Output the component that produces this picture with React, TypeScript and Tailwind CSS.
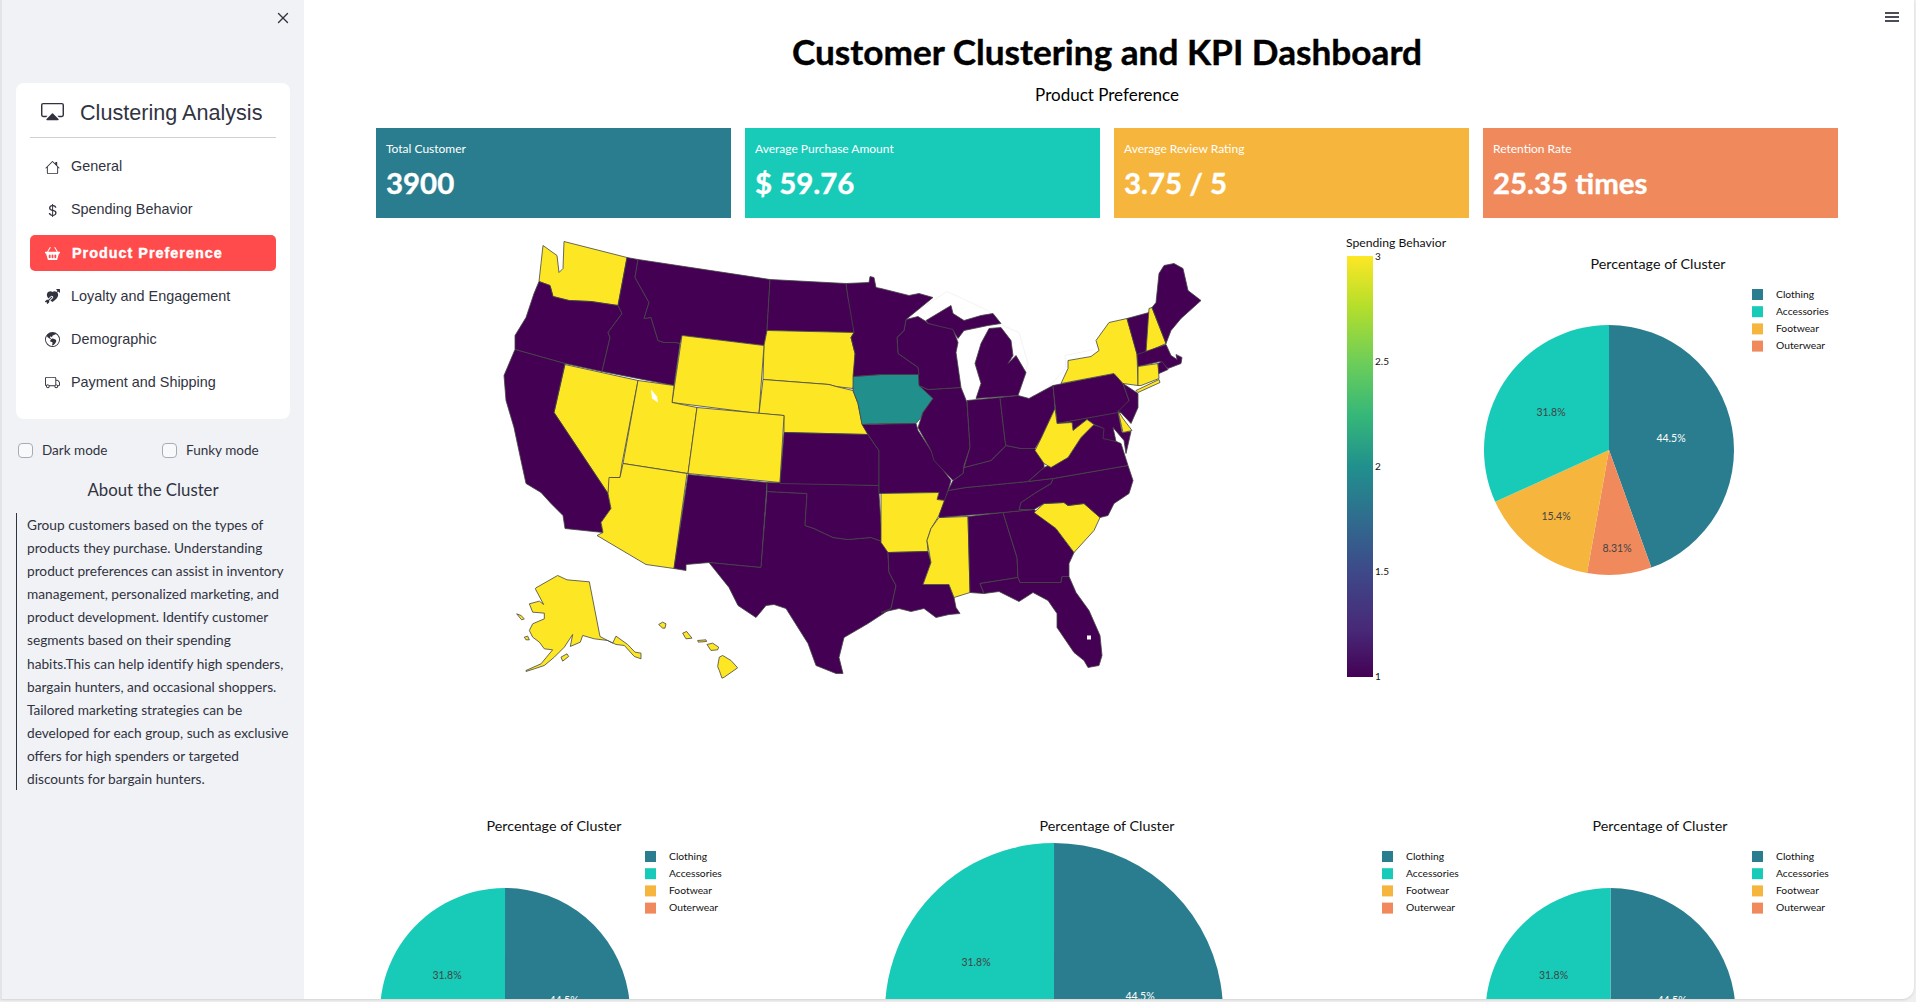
import React from 'react';
import { X } from 'lucide-react';
import {
  BsCast,
  BsHouse,
  BsCurrencyDollar,
  BsBasket2Fill,
  BsArrowThroughHeartFill,
  BsGlobeAmericas,
  BsTruck,
} from 'react-icons/bs';

const PURPLE = '#440154';
const YELLOW = '#fde725';
const TEAL = '#21908d';

const SLICES = [
  { name: 'Clothing', value: 0.445, color: '#2a7d8e' },
  { name: 'Outerwear', value: 0.0831, color: '#f08a5d' },
  { name: 'Footwear', value: 0.154, color: '#f6b53d' },
  { name: 'Accessories', value: 0.318, color: '#17cbb8' },
];
const LEGEND = ['Clothing', 'Accessories', 'Footwear', 'Outerwear'];

// page coordinates, the map svg uses the same numbers in its viewBox
const STATES: { fill: string; points: string }[] = [
  { fill: YELLOW, points: '542,245 556,255 558,272 562,268 563,241 626,257 617,305 590,301 568,300 552,296 549,285 538,281 540,263' },
  { fill: PURPLE, points: '538,281 549,285 552,296 568,300 590,301 617,305 621,313 607,332 609,337 601,371 564,363 514,349 514,335 525,317 533,293' },
  { fill: PURPLE, points: '626,257 637,259 634,277 648,302 643,318 650,317 657,340 663,342 675,342 679,343 673,385 601,371 609,337 607,332 621,313 617,305' },
  { fill: PURPLE, points: '637,259 769,279 766,330 763,345 681,335 679,343 675,342 663,342 657,340 650,317 643,318 648,302 634,277' },
  { fill: PURPLE, points: '769,279 845,283 847,297 852,317 853,332 766,330' },
  { fill: YELLOW, points: '766,330 853,332 850,337 854,353 854,377 852,388 835,386 828,384 762,379 763,345' },
  { fill: YELLOW, points: '681,335 763,345 758,413 671,402' },
  { fill: YELLOW, points: '762,379 828,384 835,386 852,390 857,403 861,423 867,434 783,432 783,415 758,413' },
  { fill: TEAL, points: '852,376 880,374 918,374 919,385 932,398 922,412 920,417 915,423 880,423 861,424 857,403 852,390' },
  { fill: YELLOW, points: '564,364 637,380 621,463 619,477 610,477 607,493 553,412' },
  { fill: PURPLE, points: '514,349 564,363 553,412 607,493 610,508 600,522 602,532 564,528 562,515 550,503 540,492 525,483 520,460 513,427 505,400 503,375' },
  { fill: YELLOW, points: '637,380 673,385 671,402 696,407 687,473 622,463' },
  { fill: YELLOW, points: '696,407 783,415 779,482 687,473' },
  { fill: YELLOW, points: '622,463 686,473 673,568 645,564 596,535 602,532 600,522 610,508 607,493 608,477 619,477' },
  { fill: PURPLE, points: '687,474 766,482 760,567 708,562 685,564 685,570 673,568' },
  { fill: PURPLE, points: '766,491 806,493 804,525 813,528 832,537 847,539 870,537 887,543 887,553 888,572 895,585 890,608 867,623 843,637 838,657 842,673 835,673 815,665 807,643 785,608 773,604 765,605 755,617 737,605 728,587 708,562 760,567' },
  { fill: PURPLE, points: '766,482 878,485 878,493 881,540 887,543 870,537 847,539 832,537 813,528 804,525 806,493 766,491' },
  { fill: PURPLE, points: '783,432 867,434 873,443 878,450 878,485 779,483' },
  { fill: PURPLE, points: '861,424 915,423 917,430 930,450 935,460 950,480 947,490 944,500 936,499 938,492 878,493 878,450 873,443 867,434' },
  { fill: YELLOW, points: '880,493 938,492 936,499 944,500 938,515 930,528 926,540 927,551 887,552 880,542' },
  { fill: PURPLE, points: '887,552 927,551 930,562 922,584 948,584 953,597 955,607 959,613 948,614 935,617 923,608 910,611 898,608 880,612 890,608 895,585 888,572' },
  { fill: YELLOW, points: '938,517 967,516 969,592 953,597 948,584 922,584 930,562 926,540 930,528' },
  { fill: PURPLE, points: '967,516 1002,512 1016,557 1017,577 979,583 983,593 969,592' },
  { fill: PURPLE, points: '1002,512 1033,509 1055,528 1073,552 1068,563 1068,576 1061,576 1060,582 1019,582 1017,577 1016,557' },
  { fill: PURPLE, points: '979,583 1017,577 1019,582 1060,582 1061,576 1068,576 1075,592 1088,610 1099,635 1101,655 1098,665 1087,667 1083,660 1073,652 1056,627 1056,613 1047,600 1032,592 1018,601 998,591 983,593' },
  { fill: YELLOW, points: '1033,512 1043,503 1063,502 1067,505 1083,503 1099,517 1093,530 1073,552 1055,528' },
  { fill: PURPLE, points: '1127,465 1132,480 1128,493 1113,503 1107,515 1099,517 1083,503 1067,505 1063,502 1043,503 1033,509 1018,509 1020,502 1035,492 1050,483 1052,478' },
  { fill: PURPLE, points: '938,517 1002,512 1033,509 1018,509 1020,502 1035,492 1050,483 1052,478 1027,481 965,487 947,490 938,515' },
  { fill: PURPLE, points: '1052,478 1127,465 1120,443 1113,440 1103,437 1104,428 1092,424 1080,437 1067,457 1043,467 1027,481' },
  { fill: PURPLE, points: '947,490 952,480 962,473 963,467 990,460 1005,445 1020,448 1034,448 1043,463 1043,467 1027,481 965,487' },
  { fill: PURPLE, points: '917,427 922,412 932,398 918,385 927,389 960,387 966,402 969,447 963,465 962,473 952,480 933,460 930,450' },
  { fill: PURPLE, points: '966,400 999,397 1004,440 1005,445 990,460 963,467 969,447' },
  { fill: PURPLE, points: '999,397 1017,395 1028,398 1052,385 1054,408 1040,438 1034,448 1020,448 1005,445 1004,440' },
  { fill: PURPLE, points: '975,398 980,383 974,363 980,343 988,328 1000,327 1010,340 1012,355 1007,363 1015,355 1025,372 1017,395' },
  { fill: PURPLE, points: '925,320 950,305 952,313 963,320 980,315 992,313 1000,323 987,325 963,330 957,338 952,330 927,323' },
  { fill: PURPLE, points: '905,319 917,316 925,321 927,323 952,329 957,342 955,352 958,373 960,387 927,389 918,385 917,367 897,353 896,337 903,330' },
  { fill: PURPLE, points: '845,283 868,282 869,276 873,277 875,287 880,288 908,295 918,293 932,297 905,319 903,330 896,337 897,353 917,367 918,374 880,374 852,376 854,353 850,337 853,332 847,297' },
  { fill: PURPLE, points: '1052,385 1113,373 1122,383 1128,400 1120,412 1056,423' },
  { fill: YELLOW, points: '1060,383 1113,373 1122,383 1137,385 1136,353 1126,318 1108,322 1095,340 1098,350 1090,356 1067,360 1067,368' },
  { fill: YELLOW, points: '1135,390 1158,379 1159,382 1137,392' },
  { fill: PURPLE, points: '1122,383 1137,393 1137,407 1130,423 1118,410 1128,400' },
  { fill: PURPLE, points: '1056,423 1117,412 1121,432 1130,431 1125,453 1123,440 1112,427 1115,441 1102,438 1103,428 1093,424 1086,419 1072,430 1071,422' },
  { fill: YELLOW, points: '1117,410 1122,418 1131,430 1122,432' },
  { fill: YELLOW, points: '1054,408 1056,423 1071,422 1072,430 1086,419 1093,424 1080,437 1067,457 1050,467 1043,463 1034,450 1040,438' },
  { fill: PURPLE, points: '1126,318 1148,312 1145,352 1136,354' },
  { fill: YELLOW, points: '1148,308 1151,307 1165,343 1145,352' },
  { fill: PURPLE, points: '1151,307 1155,302 1158,273 1163,265 1173,263 1182,268 1187,290 1200,300 1180,318 1170,330 1165,343' },
  { fill: PURPLE, points: '1136,354 1165,344 1170,355 1176,359 1175,354 1181,357 1180,363 1167,368 1159,361 1137,366' },
  { fill: YELLOW, points: '1137,366 1157,363 1158,378 1140,385 1137,385' },
  { fill: PURPLE, points: '1157,363 1161,361 1167,369 1158,373' },
];

// Alaska and Hawaii were traced at 3x, hence the scale on their group
const ISLANDS = [
  '135,382 200,345 228,358 295,364 327,528 365,548 375,527 410,552 432,575 450,578 450,595 430,588 400,555 375,552 350,540 310,535 275,525 268,545 238,558 245,522 220,560 190,590 160,615 130,625 105,633 105,630 150,610 185,568 160,565 145,545 125,530 115,510 125,490 160,475 160,458 125,455 115,430 145,422 158,432 133,385',
  '210,590 228,580 233,588 215,602',
  '100,530 110,527 115,538 105,538',
  '77,460 90,465 100,475 92,478',
  '503,492 515,485 525,490 522,503 515,503',
  '575,518 587,513 603,533 585,535',
  '620,540 645,538 647,543 622,545',
  '648,552 665,548 683,560 680,568 660,570',
  '685,590 695,585 720,600 740,622 700,650 693,653 685,630 680,618',
];

const SANS = "font-['Lato',sans-serif]";

const NAV = [
  { label: 'General', Icon: BsHouse },
  { label: 'Spending Behavior', Icon: BsCurrencyDollar },
  { label: 'Product Preference', Icon: BsBasket2Fill, active: true },
  { label: 'Loyalty and Engagement', Icon: BsArrowThroughHeartFill },
  { label: 'Demographic', Icon: BsGlobeAmericas },
  { label: 'Payment and Shipping', Icon: BsTruck },
];

const METRICS = [
  { label: 'Total Customer', value: '3900', bg: 'bg-[#2a7d8e]' },
  { label: 'Average Purchase Amount', value: '$ 59.76', bg: 'bg-[#17cbb8]' },
  { label: 'Average Review Rating', value: '3.75 / 5', bg: 'bg-[#f6b53d]' },
  { label: 'Retention Rate', value: '25.35 times', bg: 'bg-[#f08a5d]' },
];

const ABOUT =
  'Group customers based on the types of products they purchase. Understanding product preferences can assist in inventory management, personalized marketing, and product development. Identify customer segments based on their spending habits.This can help identify high spenders, bargain hunters, and occasional shoppers. Tailored marketing strategies can be developed for each group, such as exclusive offers for high spenders or targeted discounts for bargain hunters.';

interface PieProps {
  width: number;
  cx: number;
  cy: number;
  r: number;
  titleX: number;
  legendX: number;
  height: number;
  labels: { text: string; x: number; y: number; fill: string }[];
}

const slicePath = (cx: number, cy: number, r: number, from: number, to: number) => {
  const a0 = from * Math.PI * 2;
  const a1 = to * Math.PI * 2;
  const x0 = cx + r * Math.sin(a0);
  const y0 = cy - r * Math.cos(a0);
  const x1 = cx + r * Math.sin(a1);
  const y1 = cy - r * Math.cos(a1);
  return `M${cx} ${cy}L${x0} ${y0}A${r} ${r} 0 ${to - from > 0.5 ? 1 : 0} 1 ${x1} ${y1}Z`;
};

const PieChart: React.FC<PieProps> = ({ width, cx, cy, r, titleX, legendX, height, labels }) => {
  let start = 0;
  return (
    <svg width={width} height={height} className={`block ${SANS}`}>
      {SLICES.map((s) => {
        const d = slicePath(cx, cy, r, start, start + s.value);
        start += s.value;
        return <path key={s.name} d={d} fill={s.color} />;
      })}
      {labels.map((l) => (
        <text key={l.text} x={l.x} y={l.y} fill={l.fill} fontSize={10.5} textAnchor="middle" dominantBaseline="middle">
          {l.text}
        </text>
      ))}
      <text x={titleX} y={27} fontSize={14.3} fill="#111" textAnchor="middle" dominantBaseline="middle">
        Percentage of Cluster
      </text>
      {LEGEND.map((name, i) => (
        <g key={name}>
          <rect
            x={legendX}
            y={51 + i * 17.2}
            width={11}
            height={11}
            fill={SLICES.find((s) => s.name === name)!.color}
          />
          <text x={legendX + 24} y={57 + i * 17.2} fontSize={10.3} fill="#111" dominantBaseline="middle">
            {name}
          </text>
        </g>
      ))}
    </svg>
  );
};

const UsMap: React.FC = () => (
  <svg width={1094} height={560} viewBox="376 228 1094 560" className={`block ${SANS}`}>
    <defs>
      <linearGradient id="viridis" x1="0" y1="1" x2="0" y2="0">
        <stop offset="0" stopColor="#440154" />
        <stop offset="0.11" stopColor="#482878" />
        <stop offset="0.25" stopColor="#3e4989" />
        <stop offset="0.36" stopColor="#31688e" />
        <stop offset="0.5" stopColor="#21908d" />
        <stop offset="0.62" stopColor="#35b779" />
        <stop offset="0.75" stopColor="#6ece58" />
        <stop offset="0.88" stopColor="#b5de2b" />
        <stop offset="1" stopColor="#fde725" />
      </linearGradient>
    </defs>
    <g transform="translate(1 1.5)">
      {/* faint lake outlines */}
      <polyline points="905,318 946,291 987,310 1002,325 1018,332 1027,363 1017,393" fill="none" stroke="#eee" strokeWidth={0.7} />
      <polyline points="1028,398 1047,387 1065,368 1064,355 1093,349" fill="none" stroke="#eee" strokeWidth={0.7} />
      {STATES.map((s, i) => (
        <polygon key={i} points={s.points} fill={s.fill} stroke="#444" strokeWidth={0.8} strokeLinejoin="round" />
      ))}
      <g transform="translate(490 460) scale(0.3333)">
        {ISLANDS.map((p, i) => (
          <polygon key={i} points={p} fill={YELLOW} stroke="#444" strokeWidth={2.4} strokeLinejoin="round" />
        ))}
      </g>
      <polygon points="650,389 656,396 657,402 651,398" fill="#fff" />
      <rect x={1086} y={635} width={4} height={4} fill="#fff" />
    </g>
    <rect x={1347} y={257} width={26} height={421} fill="url(#viridis)" />
    <text x={1346} y={245} fontSize={12.2} fill="#111" dominantBaseline="middle">
      Spending Behavior
    </text>
    {[
      ['3', 258],
      ['2.5', 363],
      ['2', 468],
      ['1.5', 573],
      ['1', 678],
    ].map(([t, y]) => (
      <text key={t} x={1375} y={y as number} fontSize={10} fill="#111" dominantBaseline="middle">
        {t}
      </text>
    ))}
  </svg>
);

const Sidebar: React.FC = () => (
  <aside className="w-[302px] shrink-0 bg-[#f0f2f6] flex flex-col">
    <div className="h-[83px] flex justify-end pt-[9px] pr-[12px] text-[#31333f]">
      <X size={18} strokeWidth={1.8} />
    </div>
    <div className="ml-[14px] h-[336px] w-[274px] rounded-lg bg-white px-[14px] font-['Liberation_Sans',sans-serif] text-[#31333f]">
      <div className="h-[55px] flex items-center pl-[11px] pt-[3px] border-b border-[#d0d0d4]">
        <BsCast size={23} />
        <span className="ml-[16px] mt-[3px] text-[21.6px] leading-none">Clustering Analysis</span>
      </div>
      <nav className="mt-[11px] flex flex-col gap-[7.2px]">
        {NAV.map(({ label, Icon, active }) => (
          <div
            key={label}
            className={`h-9 flex items-center pl-[15px] rounded-[5px] text-[14.4px] ${
              active ? 'bg-[#ff4b4b] text-white font-bold tracking-[1px] [-webkit-text-stroke:0.4px_white]' : ''
            }`}
          >
            <Icon size={15} />
            <span className={active ? 'ml-[12px]' : 'ml-[11px]'}>{label}</span>
          </div>
        ))}
      </nav>
    </div>
    <div className={`${SANS} text-[#31333f]`}>
      <div className="mt-[23px] flex items-center h-[16px] text-[13.5px]">
        <label className="w-[160px] pl-[16px] flex items-center">
          <span className="w-[15px] h-[15px] rounded-[4px] border border-[#a8abb5] bg-[#f8f9fb]" />
          <span className="ml-[9px]">Dark mode</span>
        </label>
        <label className="flex items-center">
          <span className="w-[15px] h-[15px] rounded-[4px] border border-[#a8abb5] bg-[#f8f9fb]" />
          <span className="ml-[9px]">Funky mode</span>
        </label>
      </div>
      <h3 className="mt-[20px] w-[302px] text-center text-[16.8px] leading-6">About the Cluster</h3>
      <p className="ml-[14px] mt-[11px] w-[280px] border-l border-[#31333f] pl-[10px] text-[13.7px] leading-[23.1px]">
        {ABOUT}
      </p>
    </div>
  </aside>
);

export default function App() {
  return (
    <div className="w-[1916px] h-[1002px] bg-[#f0f0f0] overflow-hidden">
      <div className="w-[1914px] h-[999px] flex overflow-hidden rounded-br-xl border-l-2 border-[#e4e4e6] bg-white shadow-sm">
        <Sidebar />
        <main className={`relative flex-1 min-w-0 pl-[72px] pr-[76px] overflow-hidden text-black ${SANS}`}>
          <div className="absolute right-[15px] top-[12px] w-[14px] h-[10px] border-y-2 border-[#4a4c57] flex items-center">
            <div className="w-full h-[2px] bg-[#4a4c57]" />
          </div>
          <h1 className="pt-[28px] text-center text-[35.2px] font-bold leading-[46px] [-webkit-text-stroke:0.4px_black]">
            Customer Clustering and KPI Dashboard
          </h1>
          <p className="mt-[9px] text-center text-[17px] leading-6">Product Preference</p>
          <div className="mt-[21px] grid grid-cols-4 gap-[14px]">
            {METRICS.map((m) => (
              <div key={m.label} className={`h-[90px] px-[10px] pt-[12px] text-white ${m.bg}`}>
                <div className="text-[12px] leading-[18px]">{m.label}</div>
                <div className="mt-[5px] text-[29.4px] font-bold leading-[40px] [-webkit-text-stroke:0.4px_white]">{m.value}</div>
              </div>
            ))}
          </div>
          <div className="mt-[9px] h-[573px] grid grid-cols-[1094px_368px]">
            <UsMap />
            <div className="pt-[11px]">
              <PieChart
                width={368}
                height={360}
                r={125}
                cy={212}
                cx={139}
                titleX={188}
                legendX={282}
                labels={[
                  { text: '31.8%', x: 81, y: 175, fill: '#444' },
                  { text: '44.5%', x: 201, y: 201, fill: '#fff' },
                  { text: '15.4%', x: 86, y: 279, fill: '#444' },
                  { text: '8.31%', x: 147, y: 311, fill: '#444' },
                ]}
              />
            </div>
          </div>
          <div className="grid grid-cols-[492px_602px_368px]">
            <PieChart
              width={492}
              height={300}
              r={125}
              cy={213}
              cx={129}
              titleX={178}
              legendX={269}
              labels={[
                { text: '31.8%', x: 71, y: 176, fill: '#444' },
                { text: '44.5%', x: 188, y: 201, fill: '#fff' },
              ]}
            />
            <PieChart
              width={602}
              height={300}
              r={169}
              cy={212}
              cx={186}
              titleX={239}
              legendX={514}
              labels={[
                { text: '31.8%', x: 108, y: 163, fill: '#444' },
                { text: '44.5%', x: 272, y: 197, fill: '#fff' },
              ]}
            />
            <PieChart
              width={368}
              height={300}
              r={125}
              cy={213}
              cx={140.5}
              titleX={190}
              legendX={282}
              labels={[
                { text: '31.8%', x: 83.5, y: 176, fill: '#444' },
                { text: '44.5%', x: 202, y: 201, fill: '#fff' },
              ]}
            />
          </div>
        </main>
      </div>
    </div>
  );
}
